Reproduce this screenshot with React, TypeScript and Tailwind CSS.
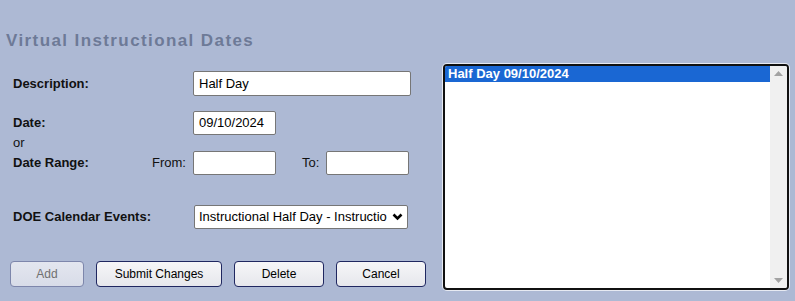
function Field({ value = "", width }: { value?: string; width: string }) {
  return (
    <div
      className={`${width} h-[24px] bg-white border border-[#767676] rounded-[2px] px-[5px] flex items-center text-[13px] text-black`}
    >
      {value}
    </div>
  );
}

function Btn({ label, width, disabled }: { label: string; width: string; disabled?: boolean }) {
  return (
    <button
      className={
        disabled
          ? `${width} h-[26px] rounded-[4px] border border-[#7d86ab] bg-gradient-to-b from-[#e3e6ef] to-[#d8dce8] text-[12px] text-[#707070]`
          : `${width} h-[26px] rounded-[4px] border border-[#1f2760] bg-gradient-to-b from-[#f6f6f8] to-[#e6e7ec] text-[12px] text-black`
      }
    >
      {label}
    </button>
  );
}

export default function App() {
  return (
    <div className="w-[795px] h-[301px] bg-[#adb9d4] font-['Liberation_Sans',Arial,sans-serif] text-[#111] overflow-hidden">
      <h1 className="pt-[30px] pl-[6px] text-[17px] leading-[21px] font-bold tracking-[1.4px] text-[#6d7a97]">
        Virtual Instructional Dates
      </h1>

      <div className="flex mt-[13px]">
        {/* form */}
        <div className="w-[443px] pl-[13px] pt-[7px] text-[13px]">
          <div className="flex items-center h-[25px]">
            <span className="w-[180px] font-bold">Description:</span>
            <div className="w-[218px] h-[25px] bg-white border border-[#767676] rounded-[2px] px-[5px] flex items-center text-black">
              Half Day
            </div>
          </div>

          <div className="flex items-center h-[24px] mt-[15px]">
            <span className="w-[180px] font-bold">Date:</span>
            <Field value="09/10/2024" width="w-[83px]" />
          </div>

          <div className="h-[16px] leading-[14px] pt-[1px]">or</div>

          <div className="flex items-center h-[24px]">
            <span className="w-[139px] font-bold">Date Range:</span>
            <span className="w-[41px]">From:</span>
            <Field width="w-[83px]" />
            <span className="ml-[26px] w-[24px]">To:</span>
            <Field width="w-[83px]" />
          </div>

          <div className="flex items-center h-[24px] mt-[30px]">
            <span className="w-[181px] font-bold">DOE Calendar Events:</span>
            <div className="w-[214px] h-[24px] bg-white border border-[#767676] rounded-[2px] pl-[4px] pr-[3px] flex items-center text-black">
              <span className="w-[191px] overflow-hidden whitespace-nowrap">
                Instructional Half Day - Instructio
              </span>
              <svg width="11" height="8" viewBox="0 0 11 8" className="ml-[2px]">
                <polyline
                  points="1.5,1.5 5.5,5.5 9.5,1.5"
                  fill="none"
                  stroke="#000"
                  strokeWidth="2.6"
                />
              </svg>
            </div>
          </div>

          <div className="flex gap-[12px] mt-[32px] -ml-[3px]">
            <Btn label="Add" width="w-[74px]" disabled />
            <Btn label="Submit Changes" width="w-[126px]" />
            <Btn label="Delete" width="w-[90px]" />
            <Btn label="Cancel" width="w-[90px]" />
          </div>
        </div>

        {/* list box */}
        <div className="w-[346px] h-[226px] border-2 border-[#111] rounded-[4px] ring-1 ring-white/70 bg-white flex overflow-hidden">
          <div className="flex-1">
            <div className="h-[16px] bg-[#1a67d3] text-white text-[13px] font-bold leading-[15px] pl-[3px]">
              Half Day 09/10/2024
            </div>
          </div>
          <div className="w-[17px] bg-[#f0f0f0] flex flex-col justify-between items-center py-[5px]">
            <svg width="9" height="5" viewBox="0 0 9 5">
              <polygon points="0,5 4.5,0 9,5" fill="#a3a3a3" />
            </svg>
            <svg width="9" height="5" viewBox="0 0 9 5">
              <polygon points="0,0 9,0 4.5,5" fill="#a3a3a3" />
            </svg>
          </div>
        </div>
      </div>
    </div>
  );
}
